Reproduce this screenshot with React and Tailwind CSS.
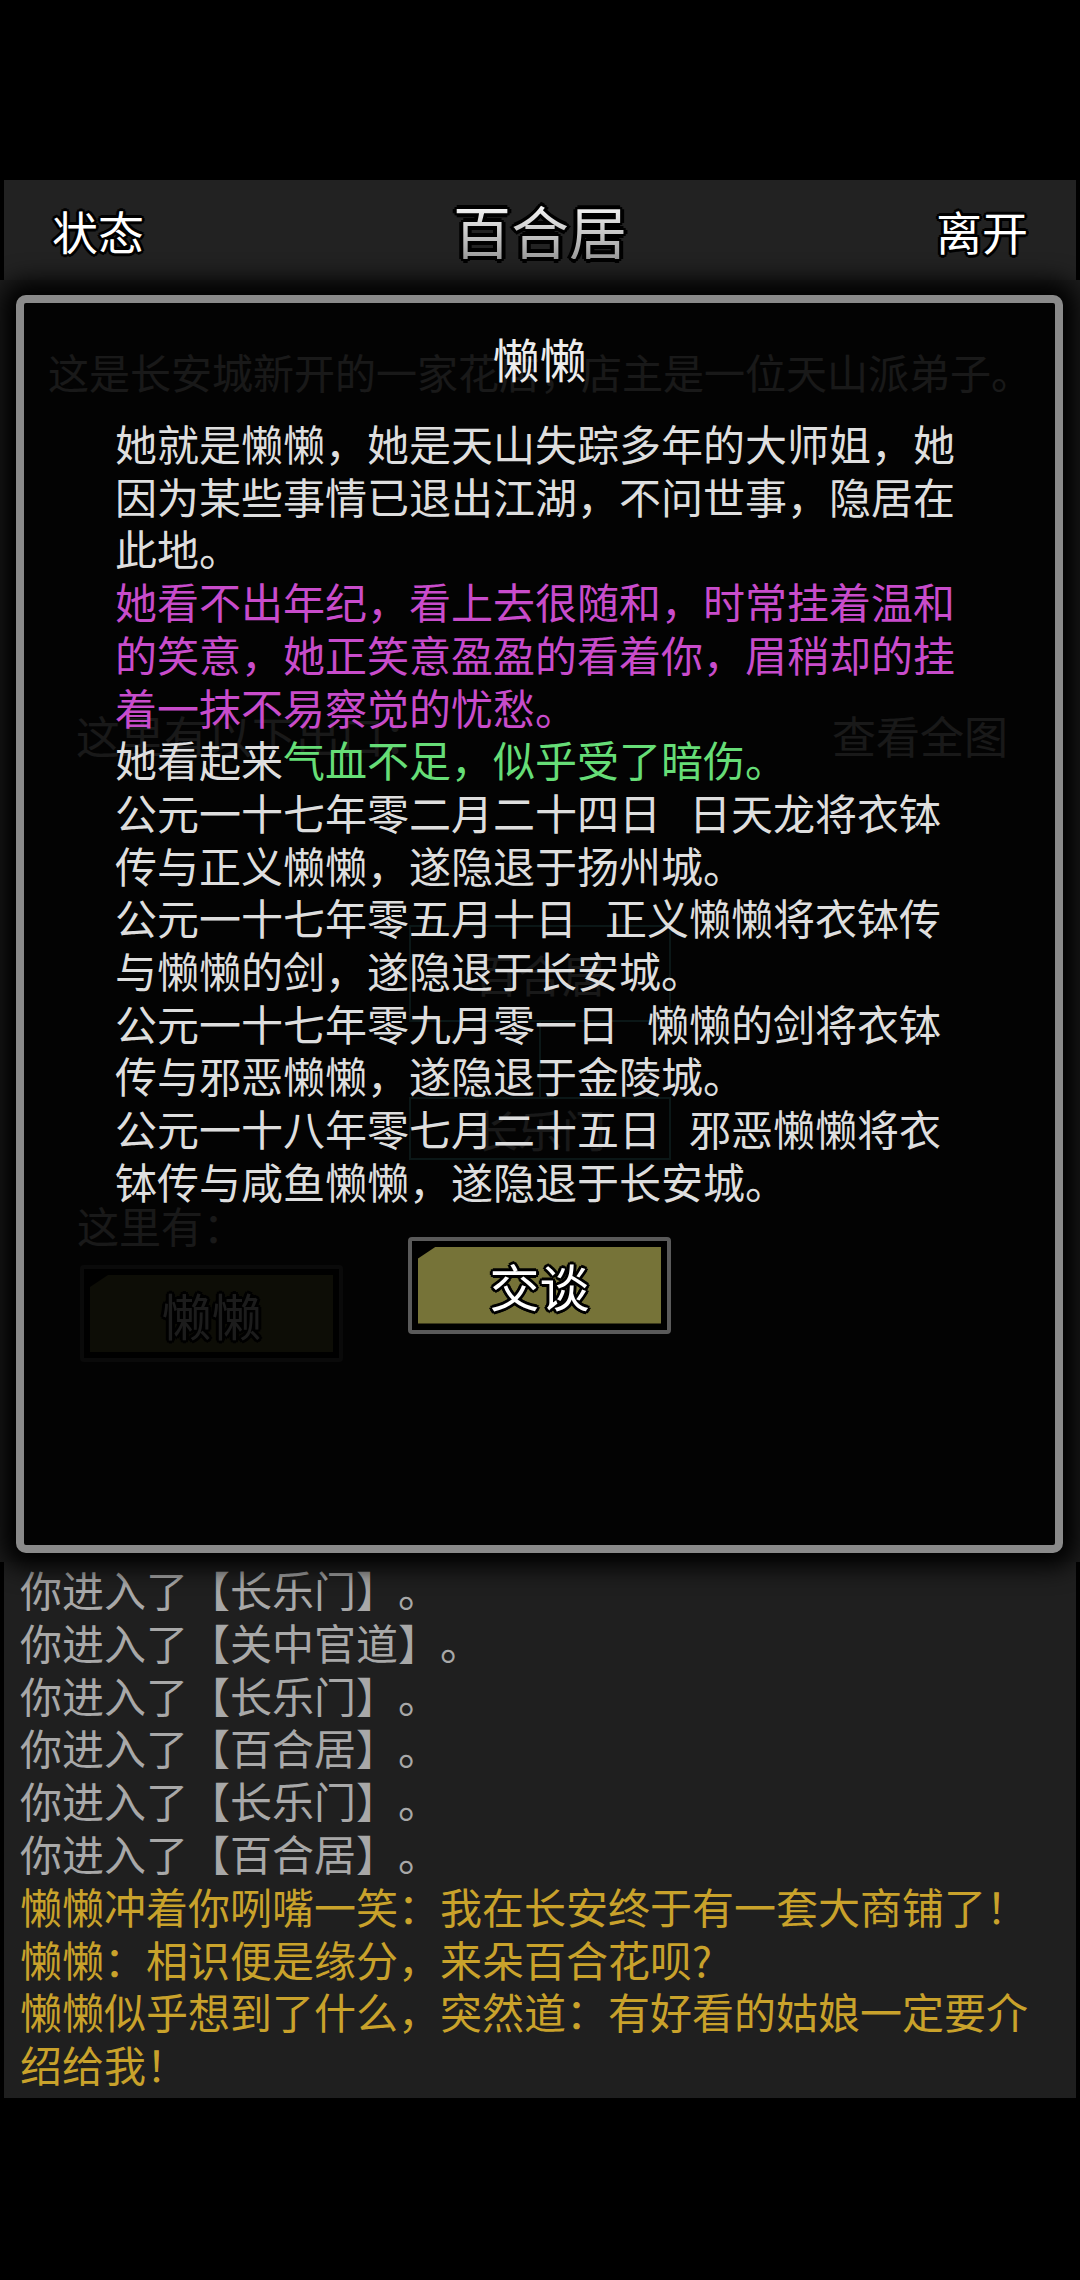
import React from 'react';

const outline =
  '[text-shadow:2px_2px_0_#000,-2px_-2px_0_#000,2px_-2px_0_#000,-2px_2px_0_#000,0_3px_0_#000,0_-3px_0_#000,3px_0_0_#000,-3px_0_0_#000]';

// Olive action button with the clipped top-left corner
const ActionButton = ({ label, className = '' }) => (
  <div className={`w-[263px] h-[97px] border-[4px] border-[#5a5a5a] rounded-[4px] bg-black p-[6px] ${className}`}>
    <div className="w-full h-full bg-[#767338] [clip-path:polygon(18px_0,100%_0,100%_100%,0_100%,0_12px)] flex items-center justify-center">
      <span className={`text-[50px] leading-none text-white ${outline}`}>{label}</span>
    </div>
  </div>
);

const Gap = () => <span className="inline-block w-[28px]" />;

const dialogLines = [
  { t: '她就是懒懒，她是天山失踪多年的大师姐，她' },
  { t: '因为某些事情已退出江湖，不问世事，隐居在' },
  { t: '此地。' },
  { t: '她看不出年纪，看上去很随和，时常挂着温和', c: 'text-[#c84ccb]' },
  { t: '的笑意，她正笑意盈盈的看着你，眉稍却的挂', c: 'text-[#c84ccb]' },
  { t: '着一抹不易察觉的忧愁。', c: 'text-[#c84ccb]' },
];

const historyLines = [
  ['公元一十七年零二月二十四日', '日天龙将衣钵'],
  ['传与正义懒懒，遂隐退于扬州城。'],
  ['公元一十七年零五月十日', '正义懒懒将衣钵传'],
  ['与懒懒的剑，遂隐退于长安城。'],
  ['公元一十七年零九月零一日', '懒懒的剑将衣钵'],
  ['传与邪恶懒懒，遂隐退于金陵城。'],
  ['公元一十八年零七月二十五日', '邪恶懒懒将衣'],
  ['钵传与咸鱼懒懒，遂隐退于长安城。'],
];

const logLines = [
  { t: '你进入了【长乐门】。' },
  { t: '你进入了【关中官道】。' },
  { t: '你进入了【长乐门】。' },
  { t: '你进入了【百合居】。' },
  { t: '你进入了【长乐门】。' },
  { t: '你进入了【百合居】。' },
  { t: '懒懒冲着你咧嘴一笑：我在长安终于有一套大商铺了！', y: true },
  { t: '懒懒：相识便是缘分，来朵百合花呗?', y: true },
  { t: '懒懒似乎想到了什么，突然道：有好看的姑娘一定要介', y: true },
  { t: '绍给我！', y: true },
];

export default function App() {
  return (
    <div className="w-[1080px] h-[2280px] bg-black flex flex-col font-['Noto_Sans_CJK_SC','Noto_Sans',sans-serif] [text-spacing-trim:space-all]">
      {/* status bar space */}
      <div className="h-[180px] shrink-0" />

      {/* Header */}
      <header className="mx-[4px] h-[100px] shrink-0 bg-[#222222] flex items-center justify-between px-[48px]">
        <span className={`text-[46px] leading-none text-white ${outline}`}>状态</span>
        <span className="text-[58px] leading-none bg-linear-to-b from-white to-[#9c9c9c] bg-clip-text text-transparent [filter:drop-shadow(2px_2px_0_#000)_drop-shadow(-2px_-2px_0_#000)_drop-shadow(2px_-2px_0_#000)_drop-shadow(-2px_2px_0_#000)]">
          百合居
        </span>
        <span className={`text-[46px] leading-none text-white ${outline}`}>离开</span>
      </header>

      {/* Room page (dimmed by the dialog over it) */}
      <section className="relative h-[1282px] shrink-0 bg-[#1d1d1d] text-[#e0e0e0]">
        <p className="pt-[65px] text-center text-[41px] leading-[52px]">
          这是长安城新开的一家花店，店主是一位天山派弟子。
        </p>
        <div className="mt-[310px] flex items-center justify-between pl-[76px] pr-[72px] text-[44px] leading-[56px]">
          <span>这里有以下出口：</span>
          <span>查看全图</span>
        </div>
        <div className="mt-[162px] flex flex-col items-center">
          <div className="w-[262px] h-[97px] border-[2px] border-[#66cccc] flex items-center justify-center text-[44px]">
            百合居
          </div>
          <div className="w-[2px] h-[75px] bg-[#66cccc]" />
          <div className="w-[262px] h-[63px] border-[2px] border-[#66cccc] flex items-center justify-center text-[44px]">
            长乐门
          </div>
        </div>
        <p className="mt-[37px] pl-[77px] text-[42px] leading-[56px]">这里有：</p>
        <ActionButton label="懒懒" className="mt-[12px] ml-[80px]" />

        {/* Dialog */}
        <div className="absolute left-[16px] right-[17px] top-[15px] bottom-[9px] border-[8px] border-[#8a8a8a] rounded-[10px] bg-black/[0.89] shadow-[0_0_24px_14px_#000] flex flex-col items-center">
          <h2 className="pt-[25px] text-[47px] leading-[60px] font-normal text-[#ececec]">懒懒</h2>
          <div className="self-stretch mt-[29px] pl-[91px] text-[42px] leading-[52.7px] text-[#dedede] whitespace-nowrap">
            {dialogLines.map((l, i) => (
              <div key={i} className={l.c}>{l.t}</div>
            ))}
            <div>
              她看起来<span className="text-[#66dd77]">气血不足，似乎受了暗伤。</span>
            </div>
            {historyLines.map((l, i) => (
              <div key={`h${i}`}>
                {l[0]}
                {l[1] && (
                  <>
                    <Gap />
                    {l[1]}
                  </>
                )}
              </div>
            ))}
          </div>
          <ActionButton label="交谈" className="mt-[29px]" />
        </div>
      </section>

      {/* Message log */}
      <section className="mx-[4px] h-[536px] shrink-0 bg-[#1f1f1f] pl-[16px] pt-[1px] text-[42px] leading-[52.8px] whitespace-nowrap">
        {logLines.map((l, i) => (
          <div key={i} className={l.y ? 'text-[#c9a22b]' : 'text-[#a8a8a8]'}>{l.t}</div>
        ))}
      </section>
    </div>
  );
}
